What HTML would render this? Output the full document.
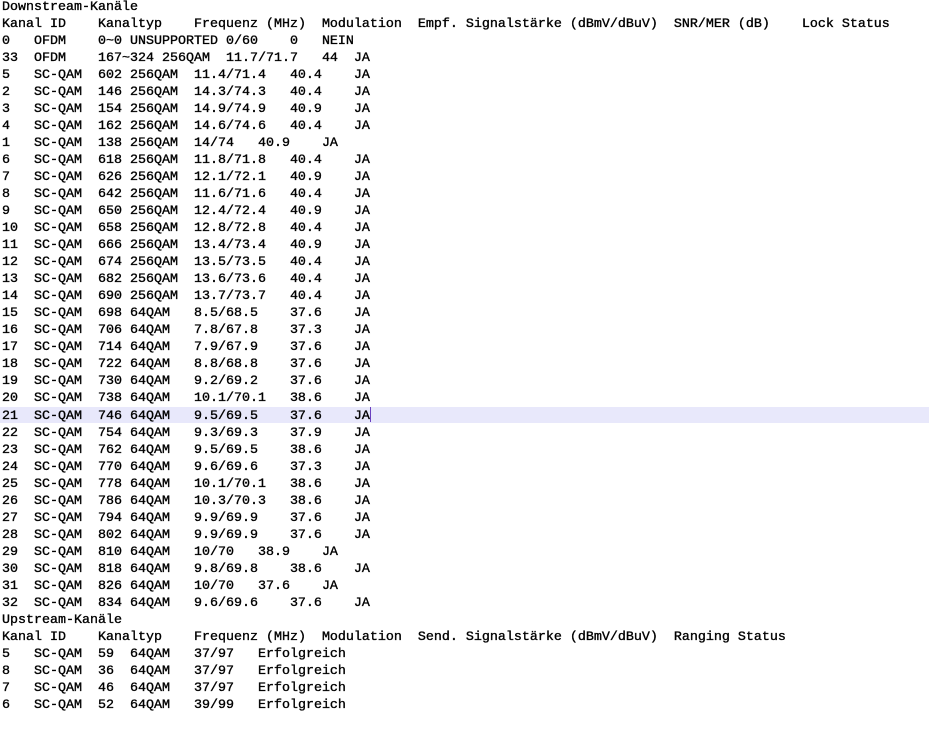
<!DOCTYPE html>
<html><head><meta charset="utf-8"><style>
html,body{margin:0;padding:0;background:#fff;width:929px;height:730px;overflow:hidden}
pre{margin:0;padding:0 0 0 2px;font-family:"Liberation Mono","DejaVu Sans Mono",monospace;font-size:13.33px;line-height:17px;tab-size:4;-moz-tab-size:4;color:#000;-webkit-text-stroke:0.35px #000;position:relative;top:-1px}
.hl{position:absolute;left:0;top:407px;width:929px;height:16px;background:#e8e8fb}
.cur{display:inline-block;width:1px;height:15px;background:#6a3fbf;vertical-align:-3px}
</style></head><body>
<div class="hl"></div>
<pre>Downstream-Kanäle
Kanal ID	Kanaltyp	Frequenz (MHz)	Modulation	Empf. Signalstärke (dBmV/dBuV)	SNR/MER (dB)	Lock Status
0	OFDM	0~0 UNSUPPORTED 0/60	0	NEIN
33	OFDM	167~324 256QAM	11.7/71.7	44	JA
5	SC-QAM	602 256QAM	11.4/71.4	40.4	JA
2	SC-QAM	146 256QAM	14.3/74.3	40.4	JA
3	SC-QAM	154 256QAM	14.9/74.9	40.9	JA
4	SC-QAM	162 256QAM	14.6/74.6	40.4	JA
1	SC-QAM	138 256QAM	14/74	40.9	JA
6	SC-QAM	618 256QAM	11.8/71.8	40.4	JA
7	SC-QAM	626 256QAM	12.1/72.1	40.9	JA
8	SC-QAM	642 256QAM	11.6/71.6	40.4	JA
9	SC-QAM	650 256QAM	12.4/72.4	40.9	JA
10	SC-QAM	658 256QAM	12.8/72.8	40.4	JA
11	SC-QAM	666 256QAM	13.4/73.4	40.9	JA
12	SC-QAM	674 256QAM	13.5/73.5	40.4	JA
13	SC-QAM	682 256QAM	13.6/73.6	40.4	JA
14	SC-QAM	690 256QAM	13.7/73.7	40.4	JA
15	SC-QAM	698 64QAM	8.5/68.5	37.6	JA
16	SC-QAM	706 64QAM	7.8/67.8	37.3	JA
17	SC-QAM	714 64QAM	7.9/67.9	37.6	JA
18	SC-QAM	722 64QAM	8.8/68.8	37.6	JA
19	SC-QAM	730 64QAM	9.2/69.2	37.6	JA
20	SC-QAM	738 64QAM	10.1/70.1	38.6	JA
21	SC-QAM	746 64QAM	9.5/69.5	37.6	JA<span class="cur"></span>
22	SC-QAM	754 64QAM	9.3/69.3	37.9	JA
23	SC-QAM	762 64QAM	9.5/69.5	38.6	JA
24	SC-QAM	770 64QAM	9.6/69.6	37.3	JA
25	SC-QAM	778 64QAM	10.1/70.1	38.6	JA
26	SC-QAM	786 64QAM	10.3/70.3	38.6	JA
27	SC-QAM	794 64QAM	9.9/69.9	37.6	JA
28	SC-QAM	802 64QAM	9.9/69.9	37.6	JA
29	SC-QAM	810 64QAM	10/70	38.9	JA
30	SC-QAM	818 64QAM	9.8/69.8	38.6	JA
31	SC-QAM	826 64QAM	10/70	37.6	JA
32	SC-QAM	834 64QAM	9.6/69.6	37.6	JA
Upstream-Kanäle
Kanal ID	Kanaltyp	Frequenz (MHz)	Modulation	Send. Signalstärke (dBmV/dBuV)	Ranging Status
5	SC-QAM	59	64QAM	37/97	Erfolgreich
8	SC-QAM	36	64QAM	37/97	Erfolgreich
7	SC-QAM	46	64QAM	37/97	Erfolgreich
6	SC-QAM	52	64QAM	39/99	Erfolgreich
</pre>
</body></html>
